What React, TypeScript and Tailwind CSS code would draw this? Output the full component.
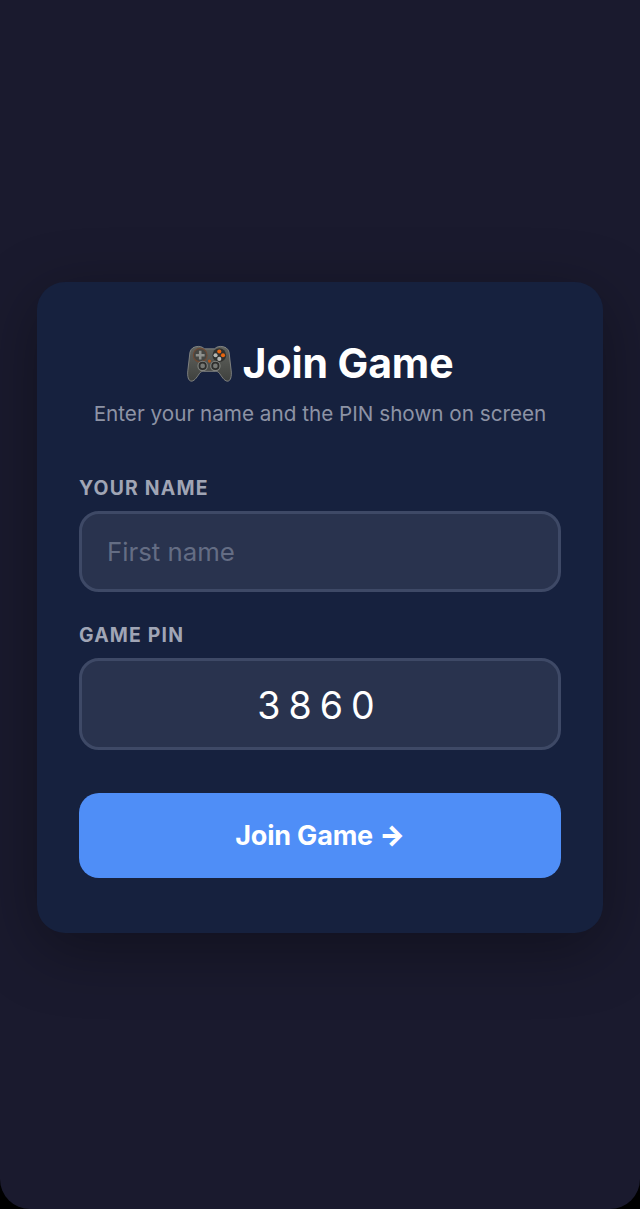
export default function App() {
  const font = { fontFamily: "Inter, 'Liberation Sans', sans-serif" };

  return (
    <div className="bg-black w-[640px] h-[1209px]" style={font}>
      <div className="bg-[#1a1a2e] h-full rounded-b-[30px] px-[37px] pt-[282px]">
        <div className="bg-[#16213e] rounded-[28px] h-[651px] px-[42px] pt-[53px] shadow-[0_16px_64px_rgba(0,0,0,0.35)]">
          <h1 className="flex items-center justify-center gap-[11px] h-[56px] text-[41px] leading-[56px] font-bold text-white tracking-[-0.1px]">
            <GamepadIcon />
            <span>Join Game</span>
          </h1>
          <p className="mt-[9px] text-center text-[20.7px] leading-[28px] text-[#8d93a5]">
            Enter your name and the PIN shown on screen
          </p>

          <label className="block mt-[46px] text-[19.4px] leading-[28px] font-bold tracking-[1.2px] uppercase text-[#a0a5b5]">
            Your Name
          </label>
          <input
            type="text"
            placeholder="First name"
            className="block w-full h-[81px] mt-[9px] px-[25px] rounded-[20px] border-[3px] border-[#3e4966] bg-[#29334e] text-[25.8px] text-white placeholder:text-[#646d84] outline-none"
          />

          <label className="block mt-[29px] text-[19.4px] leading-[28px] font-bold tracking-[1.2px] uppercase text-[#a0a5b5]">
            Game PIN
          </label>
          <input
            type="text"
            value="3860"
            readOnly
            className="block w-full h-[92px] mt-[9px] pt-[2px] px-[25px] rounded-[20px] border-[3px] border-[#3e4966] bg-[#29334e] text-[37.5px] tracking-[8px] text-center text-white outline-none"
          />

          <button className="block w-full h-[85px] mt-[43px] pt-[2px] rounded-[20px] bg-[#4f8ef7] text-[27px] font-bold text-white tracking-[-0.2px]">
            Join Game <span className="font-black">→</span>
          </button>
        </div>
      </div>
    </div>
  );
}

function GamepadIcon() {
  return (
    <svg width="45" height="40" viewBox="0 0 46 40" className="shrink-0 mt-[2px]">
      <defs>
        <linearGradient id="padBody" x1="0" y1="0" x2="0" y2="1">
          <stop offset="0" stopColor="#62645f" />
          <stop offset="1" stopColor="#3f413e" />
        </linearGradient>
      </defs>
      <path
        d="M12 2 C7 2 4 4 3 8 L0.8 27 C0.2 33 1.5 37 4 37.5 C7 38 9.5 34.5 12.5 30 C14 28 15 27.5 17 27.5 L29 27.5 C31 27.5 32 28 33.5 30 C36.5 34.5 39 38 42 37.5 C44.5 37 45.8 33 45.2 27 L43 8 C42 4 39 2 34 2 C31 2 29.5 3.5 28 4.5 L18 4.5 C16.5 3.5 15 2 12 2 Z"
        fill="url(#padBody)"
        stroke="#92948e"
        strokeWidth="0.8"
      />
      <circle cx="13.5" cy="11" r="7" fill="#454643" stroke="#6e4a35" strokeWidth="1.2" />
      <path d="M12.2 6.5 h2.6 v3.2 h3.2 v2.6 h-3.2 v3.2 h-2.6 v-3.2 h-3.2 v-2.6 h3.2 Z" fill="#8e908c" />
      <circle cx="33" cy="11" r="7" fill="#30312f" />
      <circle cx="33" cy="7.2" r="2.1" fill="#e8650f" />
      <circle cx="36.8" cy="11" r="2.1" fill="#e8650f" />
      <circle cx="29.2" cy="11" r="2.1" fill="#b5b7b3" />
      <circle cx="33" cy="14.8" r="2.1" fill="#b5b7b3" />
      <circle cx="23" cy="17" r="1.6" fill="#b5561a" />
      <circle cx="16" cy="22" r="4.8" fill="#2e2f2d" stroke="#80827e" strokeWidth="1.2" />
      <circle cx="29" cy="22" r="4.8" fill="#2e2f2d" stroke="#80827e" strokeWidth="1.2" />
      <circle cx="16" cy="22" r="2.4" fill="#767874" />
      <circle cx="29" cy="22" r="2.4" fill="#767874" />
    </svg>
  );
}
